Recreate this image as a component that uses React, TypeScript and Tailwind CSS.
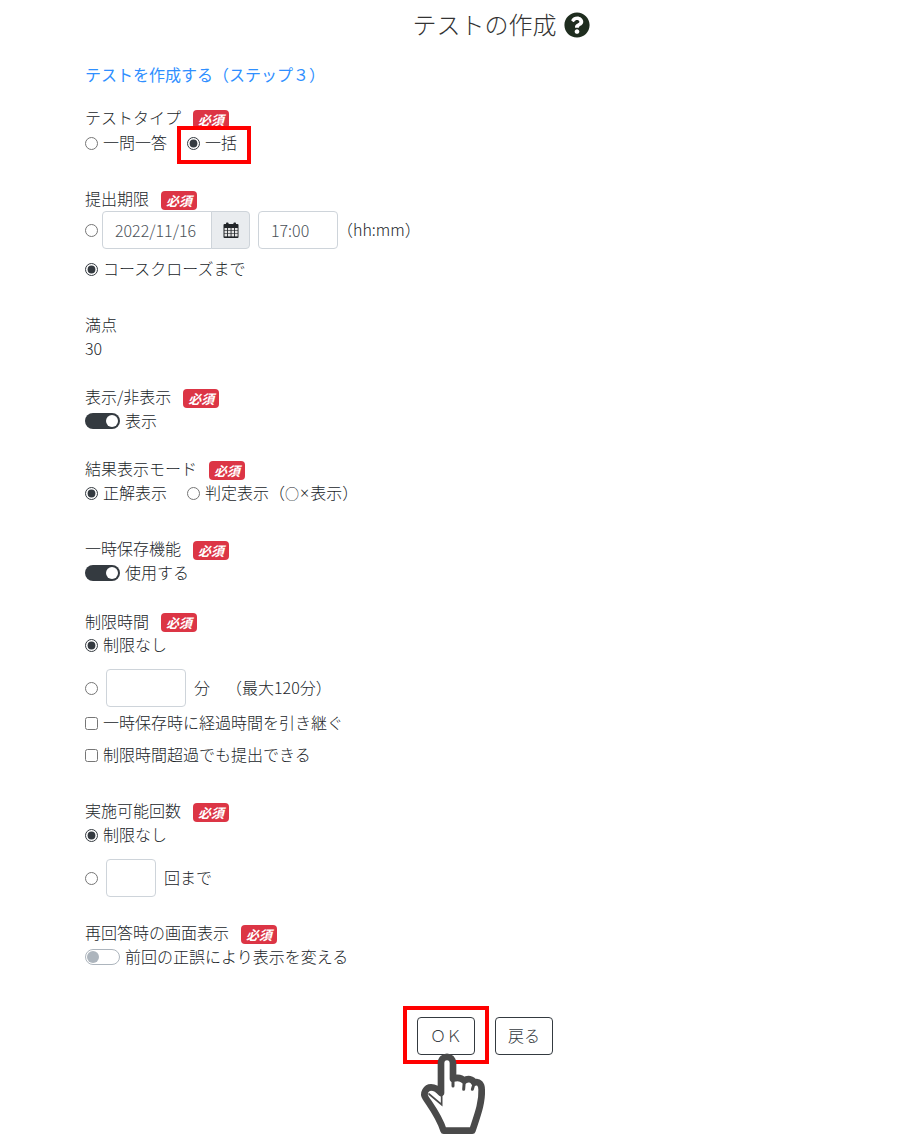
import type { ReactNode } from 'react';
import { FaQuestionCircle } from 'react-icons/fa';

function Badge({ low }: { low?: boolean }) {
    return (
        <span
            className={`ml-3 inline-flex h-[19px] w-9 items-center justify-center rounded-[4px] bg-[#dc3545] text-[13px] font-bold italic leading-none text-white ${low ? 'mt-1' : 'mt-[2px]'}`}
        >
            必須
        </span>
    );
}

function Label({ text, low, badgeLow }: { text: string; low?: boolean; badgeLow?: boolean }) {
    return (
        <div className="flex h-[23px] items-center">
            <span className={low ? 'pb-[2px]' : 'pb-1'}>{text}</span>
            <Badge low={badgeLow} />
        </div>
    );
}

function Radio({ name, label, checked }: { name: string; label?: ReactNode; checked?: boolean }) {
    return (
        <label className="flex h-6 items-center">
            <input
                type="radio"
                name={name}
                defaultChecked={checked}
                className="m-0 h-[13px] w-[13px] accent-[#343a40]"
            />
            {label && <span className="ml-[5px] pb-[2px]">{label}</span>}
        </label>
    );
}

function Check({ label }: { label: string }) {
    return (
        <label className="flex h-6 items-center">
            <input type="checkbox" className="m-0 h-[13px] w-[13px]" />
            <span className="ml-[5px] pb-[2px]">{label}</span>
        </label>
    );
}

function Toggle({ label, on }: { label: string; on?: boolean }) {
    return (
        <div className="flex h-6 items-center">
            {on ? (
                <span className="flex h-4 w-[35px] items-center justify-end rounded-full bg-[#343a40] pr-[2px]">
                    <span className="h-3 w-3 rounded-full bg-white" />
                </span>
            ) : (
                <span className="flex h-4 w-[35px] items-center rounded-full border border-[#adb5bd] bg-white pl-[1px]">
                    <span className="h-3 w-3 rounded-full bg-[#adb5bd]" />
                </span>
            )}
            <span className="ml-[5px] pb-[2px]">{label}</span>
        </div>
    );
}

function TextBox({ value, width }: { value?: string; width: string }) {
    return (
        <input
            type="text"
            defaultValue={value}
            className={`h-[38px] rounded-[4px] border border-[#ced4da] bg-white px-3 text-[#495057] outline-none ${width}`}
        />
    );
}

function CalendarIcon() {
    const cols = [1.5, 5, 8.5, 12];
    const rows = [6, 9, 12];
    return (
        <svg viewBox="0 0 16 16" className="h-4 w-4">
            <rect x="0.5" y="2" width="15" height="14" rx="1" fill="#212529" />
            <rect x="3" y="0.5" width="2.5" height="3" rx="0.8" fill="#212529" />
            <rect x="10.5" y="0.5" width="2.5" height="3" rx="0.8" fill="#212529" />
            {rows.map((y) =>
                cols.map((x) => <rect key={`${x}-${y}`} x={x} y={y} width="2.6" height="2.4" fill="#e4e4e4" />),
            )}
        </svg>
    );
}

// pointing hand over the OK button
function Hand() {
    return (
        <svg viewBox="0 0 240 261" className="absolute left-[415px] top-[1048px] h-[87px] w-20">
            <path
                d="M78 125 L78 46 C78 20 114 20 114 46 L114 92 C126 88 140 90 148 98 C158 90 172 92 178 104 C192 98 200 110 200 125 C202 165 186 205 172 248 L86 248 C72 205 52 180 32 150 C22 135 34 118 48 118 C60 118 70 125 78 135 Z"
                fill="#fff"
                stroke="#4a4a4a"
                strokeWidth="20"
                strokeLinejoin="round"
            />
            <path
                d="M114 92 L114 114 M148 98 L146 124 M178 104 L172 124"
                fill="none"
                stroke="#4a4a4a"
                strokeWidth="9"
                strokeLinecap="round"
            />
            <path d="M42 138 L80 170 L80 130" fill="none" stroke="#4a4a4a" strokeWidth="5" strokeLinecap="round" />
        </svg>
    );
}

export default function App() {
    return (
        <div
            className="relative h-[1135px] overflow-hidden bg-white text-[16px] font-light leading-6 text-[#212529]"
            style={{ fontFamily: '"Noto Sans CJK JP", "Noto Sans", sans-serif' }}
        >
            <div className="flex h-[50px] items-center justify-center gap-[7px] pl-[102px]">
                <h1 className="pb-[2px] text-[24px] font-light text-[#333]">テストの作成</h1>
                <FaQuestionCircle size={26} className="text-[#1f2d1f]" />
            </div>

            <div className="pl-[85px]">
                <a className="mt-3 block pb-[2px] font-normal text-[#2f8fff]">テストを作成する（ステップ３）</a>

                <div className="mt-[18px]">
                    <Label text="テストタイプ" low badgeLow />
                    <div className="mt-[2px] flex items-center">
                        <Radio name="type" label="一問一答" />
                        <div className="relative ml-[20px]">
                            <Radio name="type" label="一括" checked />
                            <div className="absolute -left-[10px] -top-[5px] h-[38px] w-[74px] border-4 border-[#ff0000]" />
                        </div>
                    </div>
                </div>

                <div className="mt-[33px]">
                    <Label text="提出期限" />
                    <div className="flex items-center">
                        <Radio name="due" />
                        <div className="ml-1 flex">
                            <input
                                type="text"
                                defaultValue="2022/11/16"
                                className="h-[38px] w-[110px] rounded-l-[4px] border border-[#ced4da] bg-white px-3 text-[#495057] outline-none"
                            />
                            <span className="-ml-px flex h-[38px] w-[39px] items-center justify-center rounded-r-[4px] border border-[#ced4da] bg-[#e9ecef]">
                                <CalendarIcon />
                            </span>
                        </div>
                        <TextBox value="17:00" width="ml-2 w-20" />
                        <span className="-ml-px pb-[2px]">（hh:mm）</span>
                    </div>
                    <div className="mt-2">
                        <Radio name="due" label="コースクローズまで" checked />
                    </div>
                </div>

                <div className="mt-[31px]">
                    <div className="h-6">満点</div>
                    <div className="h-6">30</div>
                </div>

                <div className="mt-[26px]">
                    <Label text="表示/非表示" />
                    <Toggle label="表示" on />
                </div>

                <div className="mt-[25px]">
                    <Label text="結果表示モード" />
                    <div className="flex items-center">
                        <Radio name="mode" label="正解表示" checked />
                        <div className="ml-[20px]">
                            <Radio
                                name="mode"
                                label={
                                    <>
                                        判定表示（<span className="text-[14px]">○</span>
                                        <span className="px-px" style={{ fontFamily: '"Noto Sans", sans-serif' }}>×</span>表示）
                                    </>
                                }
                            />
                        </div>
                    </div>
                </div>

                <div className="mt-[33px]">
                    <Label text="一時保存機能" />
                    <Toggle label="使用する" on />
                </div>

                <div className="mt-[25px]">
                    <Label text="制限時間" low />
                    <Radio name="limit" label="制限なし" checked />
                    <div className="mt-3 flex items-center">
                        <Radio name="limit" />
                        <TextBox width="ml-2 w-20" />
                        <span className="ml-2 pb-[2px]">分</span>
                        <span className="ml-4 pb-[2px]">（最大120分）</span>
                    </div>
                    <div className="mt-1">
                        <Check label="一時保存時に経過時間を引き継ぐ" />
                    </div>
                    <div className="mt-2">
                        <Check label="制限時間超過でも提出できる" />
                    </div>
                </div>

                <div className="mt-[33px]">
                    <Label text="実施可能回数" />
                    <Radio name="count" label="制限なし" checked />
                    <div className="mt-3 flex items-center">
                        <Radio name="count" />
                        <TextBox width="ml-2 w-[50px]" />
                        <span className="ml-2 pb-[2px]">回まで</span>
                    </div>
                </div>

                <div className="mt-[25px]">
                    <Label text="再回答時の画面表示" />
                    <Toggle label="前回の正誤により表示を変える" />
                </div>
            </div>

            <div className="mt-12 flex justify-center gap-5 pl-[70px]">
                <div className="relative">
                    <button className="h-[38px] w-[58px] rounded-[4px] border border-[#343a40] pb-[2px] text-[#343a40]">ＯＫ</button>
                    <div className="absolute -left-[14px] -top-[11px] h-[58px] w-[86px] border-4 border-[#ff0000]" />
                </div>
                <button className="h-[38px] w-[58px] rounded-[4px] border border-[#343a40] pb-[2px] text-[#343a40]">戻る</button>
            </div>

            <Hand />
        </div>
    );
}
